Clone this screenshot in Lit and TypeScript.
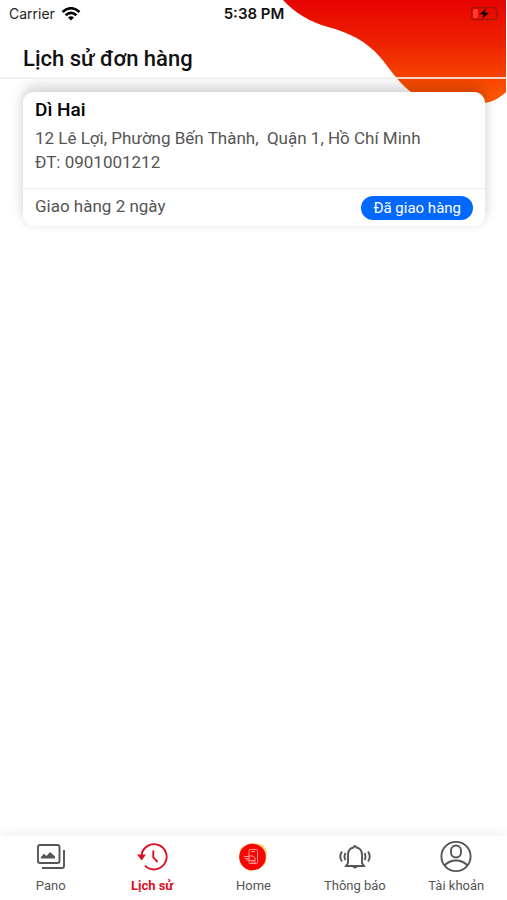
import { LitElement, html, css, svg } from "lit";
import { customElement } from "lit/decorators.js";

const icons: Record<string, unknown> = {
  pano: svg`
    <rect x="3" y="4" width="21.500" height="18" rx="2" />
    <path d="M29 9V25Q29 27 27 27H7" />
    <path class="solid" d="M6 17.500V16L9 12.800L11.500 15L15 11L20 15.500V17.500Z" />`,
  history: svg`
    <path d="M5.500 14.500A12.600 12.600 0 1 1 9 24.600" />
    <path d="M17.300 9.500V16.500L21.500 21" />
    <path class="solid" d="M1 13.500H10L5.700 19.500Z" />`,
  bell: svg`
    <path d="M7 25H25L23 22V14Q23 7.500 17.500 6.500Q16 3.500 14.500 6.500Q9 7.500 9 14V22Z" />
    <path class="solid" d="M13 25.500H19Q16 29.500 13 25.500Z" />
    <path d="M6.500 12Q4.500 15.500 6.500 19M3 10.500Q-0.500 15.500 3 20.500M25.500 12Q27.500 15.500 25.500 19M29 10.500Q32.500 15.500 29 20.500" />`,
  account: svg`
    <circle cx="16" cy="15.500" r="14.600" />
    <rect x="11" y="4.500" width="10" height="12" rx="5" />
    <path d="M4.500 24.500Q9 19.500 16 19.500Q23 19.500 27.500 24.500" />`,
  home: svg`
    <path class="halo" d="M4 7L10 3Q18 1 26 4L30 10L29 22L22 28L13 30L4 24L2 15Z" />
    <circle class="disc" cx="15.500" cy="16" r="13.300" />
    <g class="fine">
      <rect x="12" y="8.500" width="8.500" height="14" rx="1" />
      <path d="M14.500 10.500H18M7 15.500H12M8 17.500H12M9 19H12M11.500 15H16L18 17V19.500H12M14 21H19" />
    </g>`,
};

@customElement("status-bar")
class StatusBar extends LitElement {
  static styles = css`
    :host {
      display: grid;
      grid-template-columns: 1fr auto 1fr;
      align-items: center;
      height: 28px;
      padding: 0 8px 0 9px;
      font: 14px/20px Inter, sans-serif;
      color: #222;
    }
    .carrier { display: flex; align-items: center; gap: 6px; }
    .time { font-size: 15px; font-weight: 600; color: #111; }
    .wifi { width: 20px; height: 14px; }
    .battery { width: 30px; height: 16px; justify-self: end; }
  `;
  render() {
    return html`
      <div class="carrier">
        <span>Carrier</span>
        <svg class="wifi" viewBox="0 0 20 14" fill="none" stroke="#000" stroke-width="2.600" aria-hidden="true">
          <path d="M1.500 5Q10 -2.500 18.500 5M4.600 8.300Q10 3.600 15.400 8.300" />
          <path d="M7 10.500Q10 8 13 10.500L10 13.500Z" fill="#000" stroke="none" />
        </svg>
      </div>
      <time class="time">5:38 PM</time>
      <svg class="battery" viewBox="0 0 30 16" aria-hidden="true">
        <rect x="2.600" y="1.600" width="25" height="12" rx="3" fill="none" stroke="#a31708" stroke-width="1.200" />
        <path d="M28.800 5.600Q30.500 7.600 28.800 9.600Z" fill="#a31708" />
        <rect x="4" y="3" width="5" height="9" rx="1.500" fill="#ff3b36" />
        <path d="M17 2.500L10.500 8.300H14.500L13 13L20 6.800H15.800Z" fill="#160000" />
      </svg>
    `;
  }
}

@customElement("order-card")
class OrderCard extends LitElement {
  static properties = { name: {}, address: {}, phone: {}, delivery: {}, status: {} };
  declare name: string;
  declare address: string;
  declare phone: string;
  declare delivery: string;
  declare status: string;
  static styles = css`
    :host { display: block; }
    .card {
      border-radius: 11px;
      background: #fff;
      color: #555;
      font-size: 17px;
      line-height: 24px;
      box-shadow: 0 -6px 14px rgba(0, 0, 0, 0.16), 0 0 4px 4px rgba(0, 0, 0, 0.02);
    }
    .info { padding: 6px 12px 14px; border-bottom: 1px solid #ebebeb; }
    h2 { margin: 0 0 4px; font-size: 19px; line-height: 24px; font-weight: 500; color: #000; }
    p { margin: 0; white-space: pre-wrap; }
    .foot {
      display: flex;
      justify-content: space-between;
      align-items: flex-end;
      padding: 5px 12px 6px;
    }
    .foot span:first-child { padding-bottom: 2px; }
    .badge {
      padding: 0 12px;
      border-radius: 12px;
      background: #0568fd;
      color: #fff;
      font-size: 15px;
      line-height: 24px;
    }
  `;
  render() {
    return html`
      <article class="card">
        <div class="info">
          <h2>${this.name}</h2>
          <p>${this.address}</p>
          <p>ĐT: ${this.phone}</p>
        </div>
        <div class="foot">
          <span>${this.delivery}</span>
          <span class="badge">${this.status}</span>
        </div>
      </article>
    `;
  }
}

@customElement("tab-bar")
class TabBar extends LitElement {
  static properties = { active: {} };
  declare active: string;
  static styles = css`
    :host { display: block; }
    nav {
      display: grid;
      grid-template-columns: repeat(5, 1fr);
      background: #fff;
      box-shadow: 0 -4px 10px rgba(0, 0, 0, 0.05);
    }
    a {
      display: flex;
      flex-direction: column;
      align-items: center;
      gap: 4px;
      padding: 5px 0;
      color: #555;
      font-size: 13px;
      line-height: 18px;
      text-decoration: none;
    }
    a.active { color: #da1026; font-weight: 700; }
    svg {
      width: 32px;
      height: 32px;
      fill: none;
      stroke: currentColor;
      stroke-width: 1.9;
    }
    .solid { fill: currentColor; stroke: none; }
    .halo { fill: #ffd873; stroke: none; }
    .disc { fill: #fa0505; stroke: none; }
    .fine { stroke: #ffa8a0; stroke-width: 0.9; }
  `;
  private tabs = [
    ["pano", "Pano"],
    ["history", "Lịch sử"],
    ["home", "Home"],
    ["bell", "Thông báo"],
    ["account", "Tài khoản"],
  ];
  render() {
    return html`
      <nav>
        ${this.tabs.map(
          ([id, label]) => html`
            <a href="#${id}" class=${id === this.active ? "active" : ""}>
              <svg viewBox="0 0 32 32" aria-hidden="true">${icons[id]}</svg>
              <span>${label}</span>
            </a>
          `
        )}
      </nav>
    `;
  }
}

@customElement("app-root")
class AppRoot extends LitElement {
  static styles = css`
    :host {
      display: flex;
      flex-direction: column;
      position: relative;
      min-height: 100vh;
      background: #fff;
      font-family: Roboto, sans-serif;
    }
    .blob { position: absolute; top: 0; right: 0; width: 224px; height: 106px; }
    header { position: relative; border-bottom: 2px solid rgba(238, 238, 238, 0.85); }
    h1 {
      margin: 0;
      padding: 16px 23px 3px;
      font-size: 22px;
      line-height: 30px;
      font-weight: 500;
      color: #111;
    }
    main { position: relative; flex: 1; padding: 13px 22px 12px 23px; overflow: hidden; }
    tab-bar { position: relative; }
  `;
  render() {
    return html`
      <svg class="blob" viewBox="0 0 224 106" aria-hidden="true">
        <defs>
          <linearGradient id="heat" x1="0" y1="0" x2="0" y2="1">
            <stop offset="0" stop-color="#e60300" />
            <stop offset="0.450" stop-color="#ee2500" />
            <stop offset="1" stop-color="#ff5e00" />
          </linearGradient>
        </defs>
        <path
          fill="url(#heat)"
          d="M0 0C12 13 27 22 45 27C67 33 83 41 97 57C108 70 114 81 129 93C150 105 180 105 202 103C209 102 217 98 223 92V0Z"
        />
      </svg>
      <header>
        <status-bar></status-bar>
        <h1>Lịch sử đơn hàng</h1>
      </header>
      <main>
        <order-card
          name="Dì Hai"
          address="12 Lê Lợi, Phường Bến Thành,  Quận 1, Hồ Chí Minh"
          phone="0901001212"
          delivery="Giao hàng 2 ngày"
          status="Đã giao hàng"
        ></order-card>
      </main>
      <tab-bar active="history"></tab-bar>
    `;
  }
}
